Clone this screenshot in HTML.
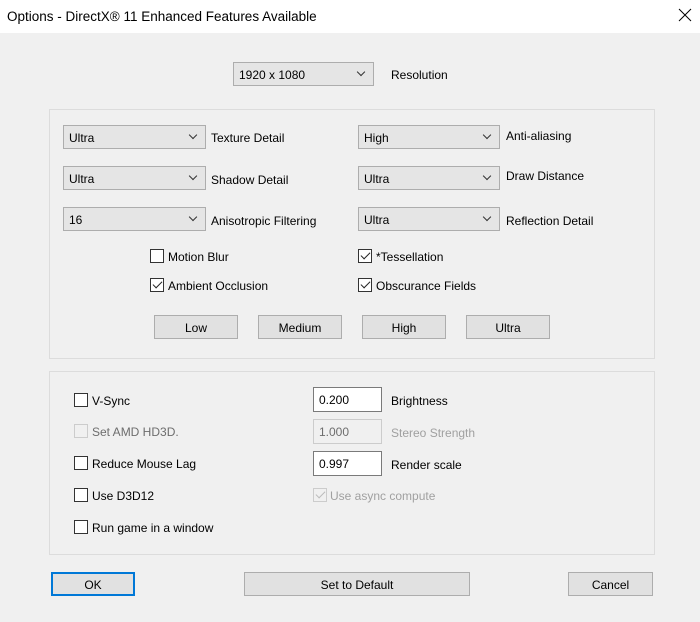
<!DOCTYPE html>
<html><head><style>
*{box-sizing:border-box;margin:0;padding:0}
body{width:700px;height:622px;background:#f0f0f0;font-family:"Liberation Sans",sans-serif;font-size:12px;color:#000;position:relative;overflow:hidden}
.a{position:absolute;white-space:nowrap}
.title{left:0;top:0;width:700px;height:33px;background:#fff}
.combo{position:absolute;height:24px;background:#e5e5e5;border:1px solid #adadad;padding:5px 0 0 5px}
.combo:after{content:"";position:absolute;right:9px;top:6px;width:5px;height:5px;border-right:1px solid #333;border-bottom:1px solid #333;transform:rotate(45deg)}
.grp{position:absolute;border:1px solid #dcdcdc}
.cb{position:absolute;width:14px;height:14px;border:1px solid #333;background:#fff}
.cb.dis{border-color:#ccc;background:#f0f0f0}
.cb.chk:after{content:"";position:absolute;left:4px;top:0px;width:4px;height:8px;border-right:1.5px solid #222;border-bottom:1.5px solid #222;transform:rotate(45deg)}
.cb.dis.chk:after{border-color:#bbb}
.btn{position:absolute;height:24px;background:#e1e1e1;border:1px solid #adadad;text-align:center;padding-top:5px}
.tb{position:absolute;width:69px;height:25px;background:#fff;border:1px solid #7a7a7a;padding:5px 0 0 5px}
.gray{color:#a0a0a0}
</style></head><body>
<div class="a title"></div>
<div class="a" style="left:7px;top:9px;font-size:13.5px">Options - DirectX® 11 Enhanced Features Available</div>
<svg class="a" style="left:678px;top:8px" width="14" height="14"><path d="M1 1L13 13M13 1L1 13" stroke="#000" stroke-width="1"/></svg>

<div class="combo" style="left:233px;top:62px;width:141px">1920 x 1080</div>
<div class="a" style="left:391px;top:68px">Resolution</div>

<div class="grp" style="left:49px;top:109px;width:606px;height:250px"></div>
<div class="combo" style="left:63px;top:125px;width:143px">Ultra</div>
<div class="a" style="left:211px;top:131px">Texture Detail</div>
<div class="combo" style="left:63px;top:166px;width:143px">Ultra</div>
<div class="a" style="left:211px;top:173px">Shadow Detail</div>
<div class="combo" style="left:63px;top:207px;width:143px">16</div>
<div class="a" style="left:211px;top:214px">Anisotropic Filtering</div>
<div class="combo" style="left:358px;top:125px;width:142px">High</div>
<div class="a" style="left:506px;top:129px">Anti-aliasing</div>
<div class="combo" style="left:358px;top:166px;width:142px">Ultra</div>
<div class="a" style="left:506px;top:169px">Draw Distance</div>
<div class="combo" style="left:358px;top:207px;width:142px">Ultra</div>
<div class="a" style="left:506px;top:214px">Reflection Detail</div>

<div class="cb" style="left:150px;top:249px"></div><div class="a" style="left:168px;top:250px">Motion Blur</div>
<div class="cb chk" style="left:150px;top:278px"></div><div class="a" style="left:168px;top:279px">Ambient Occlusion</div>
<div class="cb chk" style="left:358px;top:249px"></div><div class="a" style="left:376px;top:250px">*Tessellation</div>
<div class="cb chk" style="left:358px;top:278px"></div><div class="a" style="left:376px;top:279px">Obscurance Fields</div>

<div class="btn" style="left:154px;top:315px;width:84px">Low</div>
<div class="btn" style="left:258px;top:315px;width:84px">Medium</div>
<div class="btn" style="left:362px;top:315px;width:84px">High</div>
<div class="btn" style="left:466px;top:315px;width:84px">Ultra</div>

<div class="grp" style="left:49px;top:371px;width:606px;height:184px"></div>
<div class="cb" style="left:74px;top:393px"></div><div class="a" style="left:92px;top:394px">V-Sync</div>
<div class="cb dis" style="left:74px;top:424px"></div><div class="a" style="left:92px;top:425px;color:#6d6d6d">Set AMD HD3D.</div>
<div class="cb" style="left:74px;top:456px"></div><div class="a" style="left:92px;top:457px">Reduce Mouse Lag</div>
<div class="cb" style="left:74px;top:488px"></div><div class="a" style="left:92px;top:489px">Use D3D12</div>
<div class="cb" style="left:74px;top:520px"></div><div class="a" style="left:92px;top:521px">Run game in a window</div>

<div class="tb" style="left:313px;top:387px">0.200</div><div class="a" style="left:391px;top:394px">Brightness</div>
<div class="tb" style="left:313px;top:419px;background:#f0f0f0;border-color:#ccc;color:#6d6d6d">1.000</div><div class="a gray" style="left:391px;top:426px">Stereo Strength</div>
<div class="tb" style="left:313px;top:451px">0.997</div><div class="a" style="left:391px;top:458px">Render scale</div>
<div class="cb dis chk" style="left:313px;top:488px"></div><div class="a gray" style="left:330px;top:489px">Use async compute</div>

<div class="btn" style="left:51px;top:572px;width:84px;border:2px solid #0078d7;padding-top:4px">OK</div>
<div class="btn" style="left:244px;top:572px;width:226px">Set to Default</div>
<div class="btn" style="left:568px;top:572px;width:85px">Cancel</div>
</body></html>
